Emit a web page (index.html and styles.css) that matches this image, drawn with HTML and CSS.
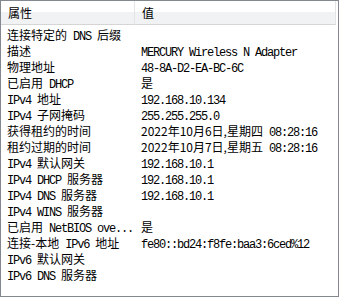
FILE: index.html
```html
<!DOCTYPE html>
<html lang="zh-CN">
<head>
    <meta charset="UTF-8">
    <meta name="viewport" content="width=device-width, initial-scale=1.0">
    <title>网络连接详细信息</title>
    <link rel="stylesheet" href="styles.css">
</head>
<body>
    <div class="details">
        <table class="props">
            <thead>
                <tr>
                    <th class="name">属性</th>
                    <th class="value">值</th>
                </tr>
            </thead>
            <tbody>
                <tr><td>连接特定的<span class="en"> DNS </span>后缀</td><td></td></tr>
                <tr><td>描述</td><td><span class="en">MERCURY Wireless N Adapter</span></td></tr>
                <tr><td>物理地址</td><td><span class="en">48-8A-D2-EA-BC-6C</span></td></tr>
                <tr><td>已启用<span class="en"> DHCP</span></td><td>是</td></tr>
                <tr><td><span class="en">IPv4 </span>地址</td><td><span class="en">192.168.10.134</span></td></tr>
                <tr><td><span class="en">IPv4 </span>子网掩码</td><td><span class="en">255.255.255.0</span></td></tr>
                <tr><td>获得租约的时间</td><td>2022年10月6日,星期四<span class="en"> 08:28:16</span></td></tr>
                <tr><td>租约过期的时间</td><td>2022年10月7日,星期五<span class="en"> 08:28:16</span></td></tr>
                <tr><td><span class="en">IPv4 </span>默认网关</td><td><span class="en">192.168.10.1</span></td></tr>
                <tr><td><span class="en">IPv4 DHCP </span>服务器</td><td><span class="en">192.168.10.1</span></td></tr>
                <tr><td><span class="en">IPv4 DNS </span>服务器</td><td><span class="en">192.168.10.1</span></td></tr>
                <tr><td><span class="en">IPv4 WINS </span>服务器</td><td></td></tr>
                <tr><td>已启用<span class="en"> NetBIOS ove...</span></td><td>是</td></tr>
                <tr><td>连接-本地<span class="en"> IPv6 </span>地址</td><td><span class="en">fe80::bd24:f8fe:baa3:6ced%12</span></td></tr>
                <tr><td><span class="en">IPv6 </span>默认网关</td><td></td></tr>
                <tr><td><span class="en">IPv6 DNS </span>服务器</td><td></td></tr>
            </tbody>
        </table>
    </div>
</body>
</html>
```

FILE: styles.css
```css
body {
    margin: 0;
    font-family: "Noto Sans CJK SC", sans-serif;
    font-size: 12px;
    color: #000;
    background: #fff;
}
.details {
    box-sizing: border-box;
    width: 339px;
    height: 297px;
    border: 1px solid #828790;
    background: #fff;
    overflow: hidden;
}
.props {
    width: 335px;
    table-layout: fixed;
    border-collapse: separate;
    border-spacing: 0;
}
.props th,
.props td {
    box-sizing: border-box;
    white-space: nowrap;
    text-align: left;
}
.props th {
    height: 24px;
    padding: 0 0 0 7px;
    font-weight: normal;
    line-height: 23px;
    background: linear-gradient(#fff 0, #fff 11px, #f1f2f4 11px, #f1f2f4 100%);
    border-bottom: 1px solid #d5d5d5;
    border-right: 1px solid #e3e5e8;
}
.props th.name {
    width: 134px;
}
.props td {
    height: 16px;
    padding: 4px 0 0 6px;
    line-height: 12px;
    vertical-align: top;
}
/* latin runs in the narrow monospaced face */
.en {
    font-family: "Liberation Mono", monospace;
    font-size: 12px;
    line-height: 0;
    letter-spacing: -1.2px;
    white-space: pre;
}
```
